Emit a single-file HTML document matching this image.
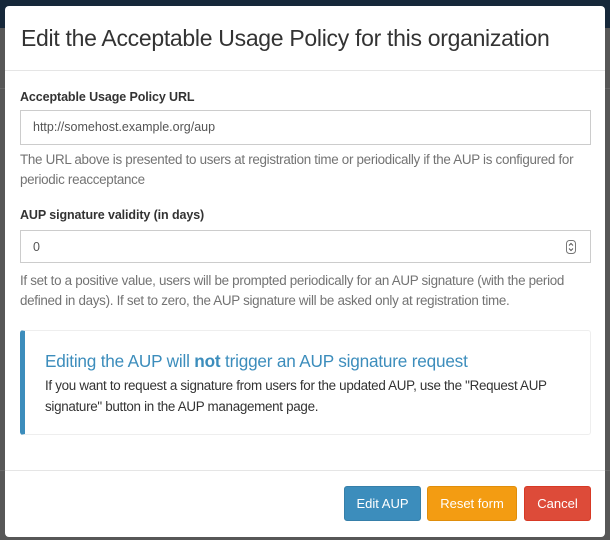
<!DOCTYPE html>
<html><head><style>
*{box-sizing:border-box;margin:0;padding:0}
body{width:610px;height:540px;background:#575757;font-family:"Liberation Sans",sans-serif;position:relative;overflow:hidden}
.top{position:absolute;left:0;top:0;width:610px;height:28px;background:#16283a}
.line{position:absolute;left:0;width:610px;height:1px;background:#666}
.modal{position:absolute;left:5px;top:6px;width:600px;height:531px;background:#fff;border-radius:4px}
.ab{position:absolute;white-space:nowrap}
h4{position:absolute;left:16px;top:19px;font-size:23px;font-weight:normal;color:#333;white-space:nowrap;letter-spacing:-0.3px}
.hr{position:absolute;left:0;width:600px;height:1px;background:#e5e5e5}
.lbl{font-size:12.5px;font-weight:bold;color:#333;letter-spacing:-0.1px}
.inp{position:absolute;left:15px;width:571px;border:1px solid #ccc;background:#fff;font-size:12.5px;color:#555;padding-left:12px}
.help{font-size:13.4px;color:#737373;line-height:20px;letter-spacing:-0.3px}
.call{position:absolute;left:15px;top:324px;width:571px;height:105px;border:1px solid #eee;border-left:5px solid #3c8dbc;border-radius:3px}
.btn{position:absolute;top:480px;height:35px;border-radius:3px;color:#fff;font-size:13px;text-align:center;line-height:33px}
</style></head><body>
<div class="top"></div>
<div class="line" style="top:88px"></div>
<div class="line" style="top:470px"></div>
<div class="modal">
<h4>Edit the Acceptable Usage Policy for this organization</h4>
<div class="hr" style="top:64px"></div>
<div class="ab lbl" style="left:15px;top:84px">Acceptable Usage Policy URL</div>
<div class="inp" style="top:104px;height:35px;line-height:33px">http://somehost.example.org/aup</div>
<div class="ab help" style="left:15px;top:144px">The URL above is presented to users at registration time or periodically if the AUP is configured for<br>periodic reacceptance</div>
<div class="ab lbl" style="left:15px;top:202px">AUP signature validity (in days)</div>
<div class="inp" style="top:224px;height:33px;line-height:33px">0
<svg style="position:absolute;right:14px;top:9px" width="10" height="14" viewBox="0 0 10 14"><rect x="0.5" y="0.5" width="9" height="13" rx="3" fill="none" stroke="#777"/><path d="M3 5.5L5 3.5 7 5.5M3 8.5L5 10.5 7 8.5" fill="none" stroke="#555"/></svg></div>
<div class="ab help" style="left:15px;top:265px">If set to a positive value, users will be prompted periodically for an AUP signature (with the period<br>defined in days). If set to zero, the AUP signature will be asked only at registration time.</div>
<div class="call">
<div class="ab" style="left:20px;top:20px;font-size:17.2px;color:#3c8dbc;letter-spacing:-0.2px">Editing the AUP will <b>not</b> trigger an AUP signature request</div>
<div class="ab" style="left:20px;top:44px;font-size:13.4px;color:#333;line-height:21px;letter-spacing:-0.3px">If you want to request a signature from users for the updated AUP, use the "Request AUP<br>signature" button in the AUP management page.</div>
</div>
<div class="hr" style="top:464px"></div>
<div class="btn" style="left:339px;width:77px;background:#3c8dbc;border:1px solid #367fa9">Edit AUP</div>
<div class="btn" style="left:422px;width:90px;background:#f39c12;border:1px solid #e08e0b">Reset form</div>
<div class="btn" style="left:519px;width:67px;background:#dd4b39;border:1px solid #d73925">Cancel</div>
</div>
</body></html>
